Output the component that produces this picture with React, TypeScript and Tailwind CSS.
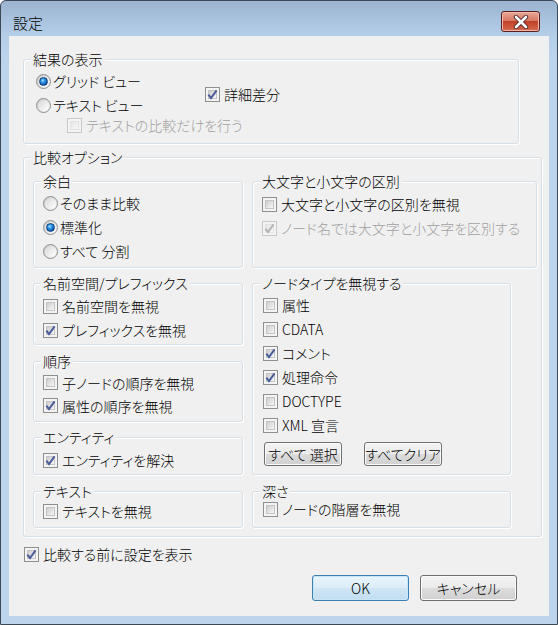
import type { ReactNode } from 'react';
import clsx from 'clsx';

// Win7 style check box
function Box({ checked, disabled }: { checked?: boolean; disabled?: boolean }) {
  return (
    <span
      className={clsx(
        'relative block h-[15px] w-[15px] shrink-0 border',
        disabled ? 'border-[#c8c8c8] bg-[#f4f4f4]' : 'border-[#8e8f8f] bg-[#f4f4f4]'
      )}
    >
      <span
        className={clsx(
          'absolute inset-[2px] border',
          disabled
            ? 'border-[#e2e2e2] bg-[linear-gradient(135deg,#e4e4e4,#f8f8f8)]'
            : 'border-[#c4c4c4] bg-[linear-gradient(135deg,#cdcdcd,#f7f7f7)]'
        )}
      />
      {checked && (
        <svg className="absolute inset-0" viewBox="0 0 13 13" width="13" height="13">
          <path
            d="M2.4 6.6 L5 10 L10.6 2.4"
            fill="none"
            stroke={disabled ? '#b4b4b4' : '#4a5c9a'}
            strokeWidth="2"
          />
        </svg>
      )}
    </span>
  );
}

function Radio({ checked }: { checked?: boolean }) {
  return (
    <span className="relative block h-[15px] w-[15px] shrink-0 rounded-full border border-[#8e8f8f] bg-[linear-gradient(135deg,#c4c4c4,#fbfbfb)]">
      <span className="absolute inset-[1px] rounded-full bg-[linear-gradient(135deg,#d8d8d8,#ffffff)]" />
      {checked && (
        <span className="absolute inset-[2px] rounded-full border border-[#143f7c] bg-[radial-gradient(circle_at_40%_35%,#a8e0ff_0%,#2a93ea_35%,#0b4497_85%)]" />
      )}
    </span>
  );
}

function Check({
  label,
  checked,
  disabled,
  className,
}: {
  label: ReactNode;
  checked?: boolean;
  disabled?: boolean;
  className?: string;
}) {
  return (
    <div className={clsx('flex h-[24px] items-center gap-[4px]', disabled && 'text-[#a0a0a0]', className)}>
      <Box checked={checked} disabled={disabled} />
      <span className="whitespace-nowrap">{label}</span>
    </div>
  );
}

function Option({ label, checked, className }: { label: string; checked?: boolean; className?: string }) {
  return (
    <div className={clsx('flex h-[24px] items-center gap-[2px]', className)}>
      <Radio checked={checked} />
      <span className="whitespace-nowrap">{label}</span>
    </div>
  );
}

function Group({ title, className, children }: { title: string; className?: string; children?: ReactNode }) {
  return (
    <div className={clsx('relative shrink-0 rounded-[3px] border border-[#d5dfe5] shadow-[inset_1px_1px_0_#ffffff,1px_1px_0_#ffffff]', className)}>
      <span className="absolute -top-[9px] left-[7px] whitespace-nowrap bg-[#f0f0f0] px-[2px] leading-[16px]">
        {title}
      </span>
      {children}
    </div>
  );
}

function Button({ children, primary, className }: { children: ReactNode; primary?: boolean; className?: string }) {
  return (
    <button
      className={clsx(
        'flex items-center justify-center rounded-[3px] border',
        primary
          ? 'border-[#3c7fb1] bg-[linear-gradient(180deg,#eaf5fc_0%,#dcedf8_50%,#cfe6f5_50%,#c3def0_100%)] shadow-[inset_0_0_0_1px_#c8e6f8]'
          : 'border-[#707070] bg-[linear-gradient(180deg,#f3f3f3_0%,#ebebeb_50%,#dddddd_50%,#d0d0d0_100%)] shadow-[inset_0_0_0_1px_#fbfbfb]',
        className
      )}
    >
      {children}
    </button>
  );
}

function CloseButton() {
  return (
    <div className="mr-[9px] mt-[10px] flex h-[21px] w-[39px] items-center justify-center rounded-[3px] border border-[#5a1e1e] bg-[linear-gradient(180deg,#e9a898_0%,#d77a64_45%,#c2412a_50%,#d46a4e_100%)] shadow-[inset_0_0_0_1px_#f0b8a8]">
      <svg width="18" height="14" viewBox="0 0 18 14">
        <path
          d="M4 2 L14 12 M14 2 L4 12"
          stroke="#4b2424"
          strokeWidth="4.4"
          strokeLinecap="round"
        />
        <path
          d="M4 2 L14 12 M14 2 L4 12"
          stroke="#ffffff"
          strokeWidth="2.6"
          strokeLinecap="round"
        />
      </svg>
    </div>
  );
}

export default function App() {
  return (
    <div className="h-[625px] w-[558px] font-['Noto_Sans_CJK_JP','Liberation_Sans',sans-serif] text-[14px] font-light leading-[16px] text-black [font-feature-settings:'palt']">
      <div className="flex h-full flex-col rounded-t-[6px] border border-[#3d4855] bg-[linear-gradient(180deg,#9ab4d1_0px,#b6cfe9_36px,#bcd4ec_60px)] px-[8px] pb-[8px]">
        {/* Title bar */}
        <div className="flex h-[35px] shrink-0 items-start justify-between">
          <span className="ml-[4px] mt-[14px] text-[15px]">設定</span>
          <CloseButton />
        </div>

        {/* Client area */}
        <div className="flex flex-1 flex-col bg-[#f0f0f0]">
          <Group title="結果の表示" className="ml-[14px] mt-[23px] h-[85px] w-[496px]">
            <div className="flex">
              <div className="w-[181px] pl-[12px] pt-[9px]">
                <Option label="グリッド ビュー" checked />
                <Option label="テキスト ビュー" />
                <Check label="テキストの比較だけを行う" disabled className="ml-[31px] !h-[16px]" />
              </div>
              <div className="pt-[26px]">
                <Check label="詳細差分" checked className="!h-[16px]" />
              </div>
            </div>
          </Group>

          <Group title="比較オプション" className="ml-[14px] mt-[13px] h-[380px] w-[519px]">
            <div className="flex gap-[9px] pl-[9px] pt-[23px]">
              <div className="flex w-[210px] flex-col">
                <Group title="余白" className="h-[87px] w-[210px]">
                  <div className="pl-[9px] pt-[9px]">
                    <Option label="そのまま比較" />
                    <Option label="標準化" checked />
                    <Option label="すべて 分割" />
                  </div>
                </Group>
                <Group title="名前空間/プレフィックス" className="mt-[15px] h-[62px] w-[210px]">
                  <div className="pl-[9px] pt-[10px]">
                    <Check label="名前空間を無視" />
                    <Check label="プレフィックスを無視" checked />
                  </div>
                </Group>
                <Group title="順序" className="mt-[16px] h-[61px] w-[210px]">
                  <div className="pl-[9px] pt-[9px]">
                    <Check label="子ノードの順序を無視" className="!h-[23px]" />
                    <Check label="属性の順序を無視" checked className="!h-[23px]" />
                  </div>
                </Group>
                <Group title="エンティティ" className="mt-[15px] h-[38px] w-[210px]">
                  <div className="pl-[9px] pt-[10px]">
                    <Check label="エンティティを解決" checked />
                  </div>
                </Group>
                <Group title="テキスト" className="mt-[16px] h-[37px] w-[210px]">
                  <div className="pl-[9px] pt-[7px]">
                    <Check label="テキストを無視" />
                  </div>
                </Group>
              </div>

              <div className="flex flex-col">
                <Group title="大文字と小文字の区別" className="h-[87px] w-[285px]">
                  <div className="pl-[9px] pt-[10px]">
                    <Check label="大文字と小文字の区別を無視" />
                    <Check label="ノード名では大文字と小文字を区別する" checked disabled />
                  </div>
                </Group>
                <Group title="ノードタイプを無視する" className="mt-[15px] h-[192px] w-[259px]">
                  <div className="pl-[10px] pt-[9px]">
                    <Check label="属性" />
                    <Check label="CDATA" />
                    <Check label="コメント" checked />
                    <Check label="処理命令" checked />
                    <Check label="DOCTYPE" />
                    <Check label="XML 宣言" />
                    <div className="ml-[1px] mt-[5px] flex gap-[22px]">
                      <Button className="h-[24px] w-[78px]">すべて 選択</Button>
                      <Button className="h-[24px] w-[78px]">すべてクリア</Button>
                    </div>
                  </div>
                </Group>
                <Group title="深さ" className="mt-[16px] h-[37px] w-[259px]">
                  <div className="pl-[10px] pt-[9px]">
                    <Check label="ノードの階層を無視" className="!h-[16px]" />
                  </div>
                </Group>
              </div>
            </div>
          </Group>

          <Check label="比較する前に設定を表示" checked className="ml-[15px] mt-[9px] !h-[16px]" />

          <div className="mt-[13px] flex justify-end gap-[11px] pr-[32px]">
            <Button primary className="h-[26px] w-[97px]">
              OK
            </Button>
            <Button className="h-[26px] w-[97px]">キャンセル</Button>
          </div>
        </div>
      </div>
    </div>
  );
}
